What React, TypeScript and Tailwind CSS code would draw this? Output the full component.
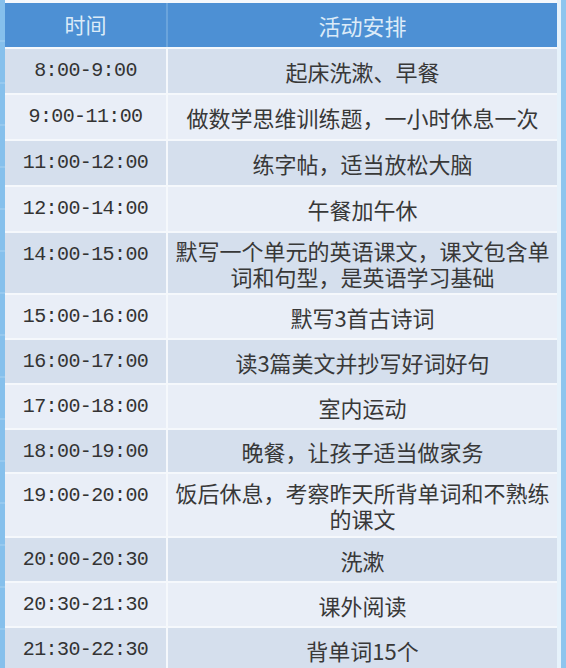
const rows: { time: string; act: string; h: string }[] = [
  { time: '8:00-9:00', act: '起床洗漱、早餐', h: 'h-[44px]' },
  { time: '9:00-11:00', act: '做数学思维训练题，一小时休息一次', h: 'h-[44px]' },
  { time: '11:00-12:00', act: '练字帖，适当放松大脑', h: 'h-[44px]' },
  { time: '12:00-14:00', act: '午餐加午休', h: 'h-[44px]' },
  { time: '14:00-15:00', act: '默写一个单元的英语课文，课文包含单词和句型，是英语学习基础', h: 'h-[60px]' },
  { time: '15:00-16:00', act: '默写3首古诗词', h: 'h-[43px]' },
  { time: '16:00-17:00', act: '读3篇美文并抄写好词好句', h: 'h-[43px]' },
  { time: '17:00-18:00', act: '室内运动', h: 'h-[43px]' },
  { time: '18:00-19:00', act: '晚餐，让孩子适当做家务', h: 'h-[42px]' },
  { time: '19:00-20:00', act: '饭后休息，考察昨天所背单词和不熟练的课文', h: 'h-[62px]' },
  { time: '20:00-20:30', act: '洗漱', h: 'h-[43px]' },
  { time: '20:30-21:30', act: '课外阅读', h: 'h-[43px]' },
  { time: '21:30-22:30', act: '背单词15个', h: 'h-[43px]' },
];

const cjk = "font-['Noto_Sans_CJK_SC',sans-serif]";

export default function App() {
  return (
    <div className="w-[566px] h-[668px] overflow-hidden bg-[#d4e9f9] flex">
      {/* left frame strip */}
      <div className="w-[5px] shrink-0 bg-[#86c0ec] bg-[repeating-linear-gradient(180deg,#86c0ec_0px,#86c0ec_40px,#a7d2f2_41px,#86c0ec_42px)]" />
      <div className="flex-1 flex flex-col pt-[3px] bg-[#f5f8fc]">
        <div className={`grid grid-cols-[161px_1fr] gap-x-[2px] h-[44px] shrink-0 bg-[#6aa4dc] ${cjk}`}>
          <div className="bg-[#4d90d4] flex items-center justify-center text-[21px] text-[#dcebf8]">时间</div>
          <div className="bg-[#4d90d4] flex items-center justify-center text-[22px] text-[#dcebf8]">活动安排</div>
        </div>
        <div className="flex flex-col gap-y-[2px] pt-[2px]">
          {rows.map((r, i) => (
            <div
              key={r.time}
              className={`grid grid-cols-[161px_1fr] gap-x-[2px] shrink-0 ${r.h}`}
            >
              <div
                className={`${i % 2 === 0 ? 'bg-[#d5dfed]' : 'bg-[#e9eef7]'} pt-[9px] text-center text-[20px] tracking-[-0.6px] leading-[26px] text-[#333] font-['Liberation_Mono',monospace]`}
              >
                {r.time}
              </div>
              <div
                className={`${i % 2 === 0 ? 'bg-[#d5dfed]' : 'bg-[#e9eef7]'} flex items-center justify-center px-[6px] text-center text-[22px] leading-[26px] text-[#383838] ${cjk}`}
              >
                <span>{r.act}</span>
              </div>
            </div>
          ))}
        </div>
      </div>
      {/* right frame strip */}
      <div className="w-[4px] shrink-0 bg-[#e6f2fb]" />
      <div className="w-[5px] shrink-0 bg-[#8ec5ee]" />
    </div>
  );
}
